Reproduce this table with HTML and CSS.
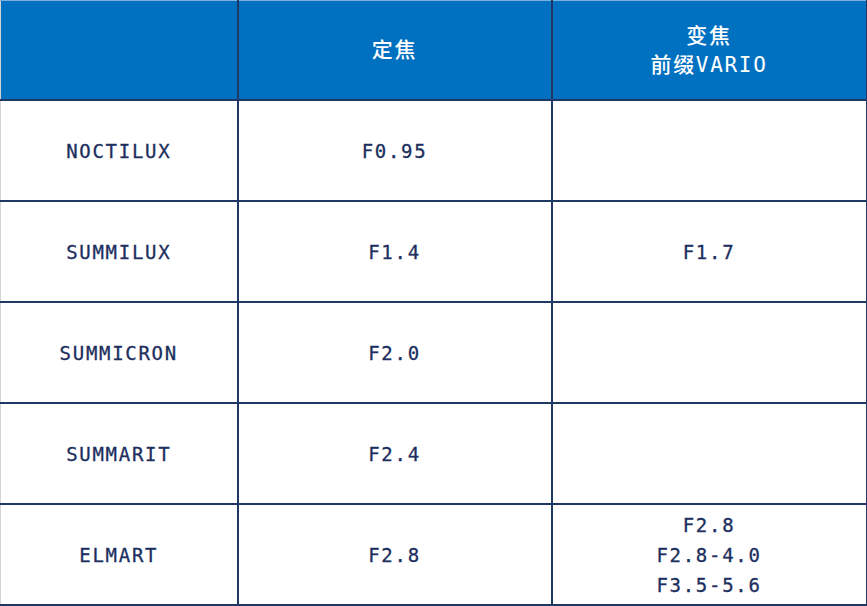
FILE: index.html
```html
<!DOCTYPE html>
<html lang="zh">
<head>
<meta charset="utf-8">
<link rel="stylesheet" href="styles.css">
</head>
<body>
<table class="lens-table">
  <colgroup>
    <col class="col-name">
    <col class="col-prime">
    <col class="col-zoom">
  </colgroup>
  <thead>
    <tr class="head-row">
      <th></th>
      <th>定焦</th>
      <th>变焦<br>前缀VARIO</th>
    </tr>
  </thead>
  <tbody>
    <tr><td>NOCTILUX</td><td>F0.95</td><td></td></tr>
    <tr><td>SUMMILUX</td><td>F1.4</td><td>F1.7</td></tr>
    <tr><td>SUMMICRON</td><td>F2.0</td><td></td></tr>
    <tr><td>SUMMARIT</td><td>F2.4</td><td></td></tr>
    <tr class="last-row"><td>ELMART</td><td>F2.8</td><td>F2.8<br>F2.8-4.0<br>F3.5-5.6</td></tr>
  </tbody>
</table>
</body>
</html>
```
FILE: styles.css
```css
html, body {
  margin: 0;
  padding: 0;
  background: #ffffff;
}

.lens-table {
  border-collapse: collapse;
  width: 866px;
  table-layout: fixed;
  border-top: 1px solid #7fb0e0;
  border-left: 1px solid #d4d4d4;
  font-family: "DejaVu Sans Mono", "Noto Sans CJK SC", monospace;
  color: #1c2f5e;
}

.col-name { width: 237px; }
.col-prime { width: 314px; }
.col-zoom { width: 315px; }

.lens-table th,
.lens-table td {
  border: 2px solid #1f3864;
  text-align: center;
  vertical-align: middle;
  padding: 0;
  height: 99px;
  font-size: 19px;
  letter-spacing: 1.7px;
  line-height: 30px;
  font-weight: normal;
  -webkit-text-stroke: 0.3px #1c2f5e;
}

.lens-table tr:first-child th {
  border-top: 1px solid #7fb0e0;
}

.lens-table tr td:first-child,
.lens-table tr th:first-child {
  border-left: 1px solid #d4d4d4;
}

.head-row th {
  background: #0070c0;
  color: #ffffff;
  -webkit-text-stroke: 0;
  font-family: "DejaVu Sans Mono", "Noto Sans CJK SC", monospace;
  font-size: 21px;
  line-height: 29px;
  font-weight: 500;
  height: 97px;
  padding-top: 1px;
}
```
